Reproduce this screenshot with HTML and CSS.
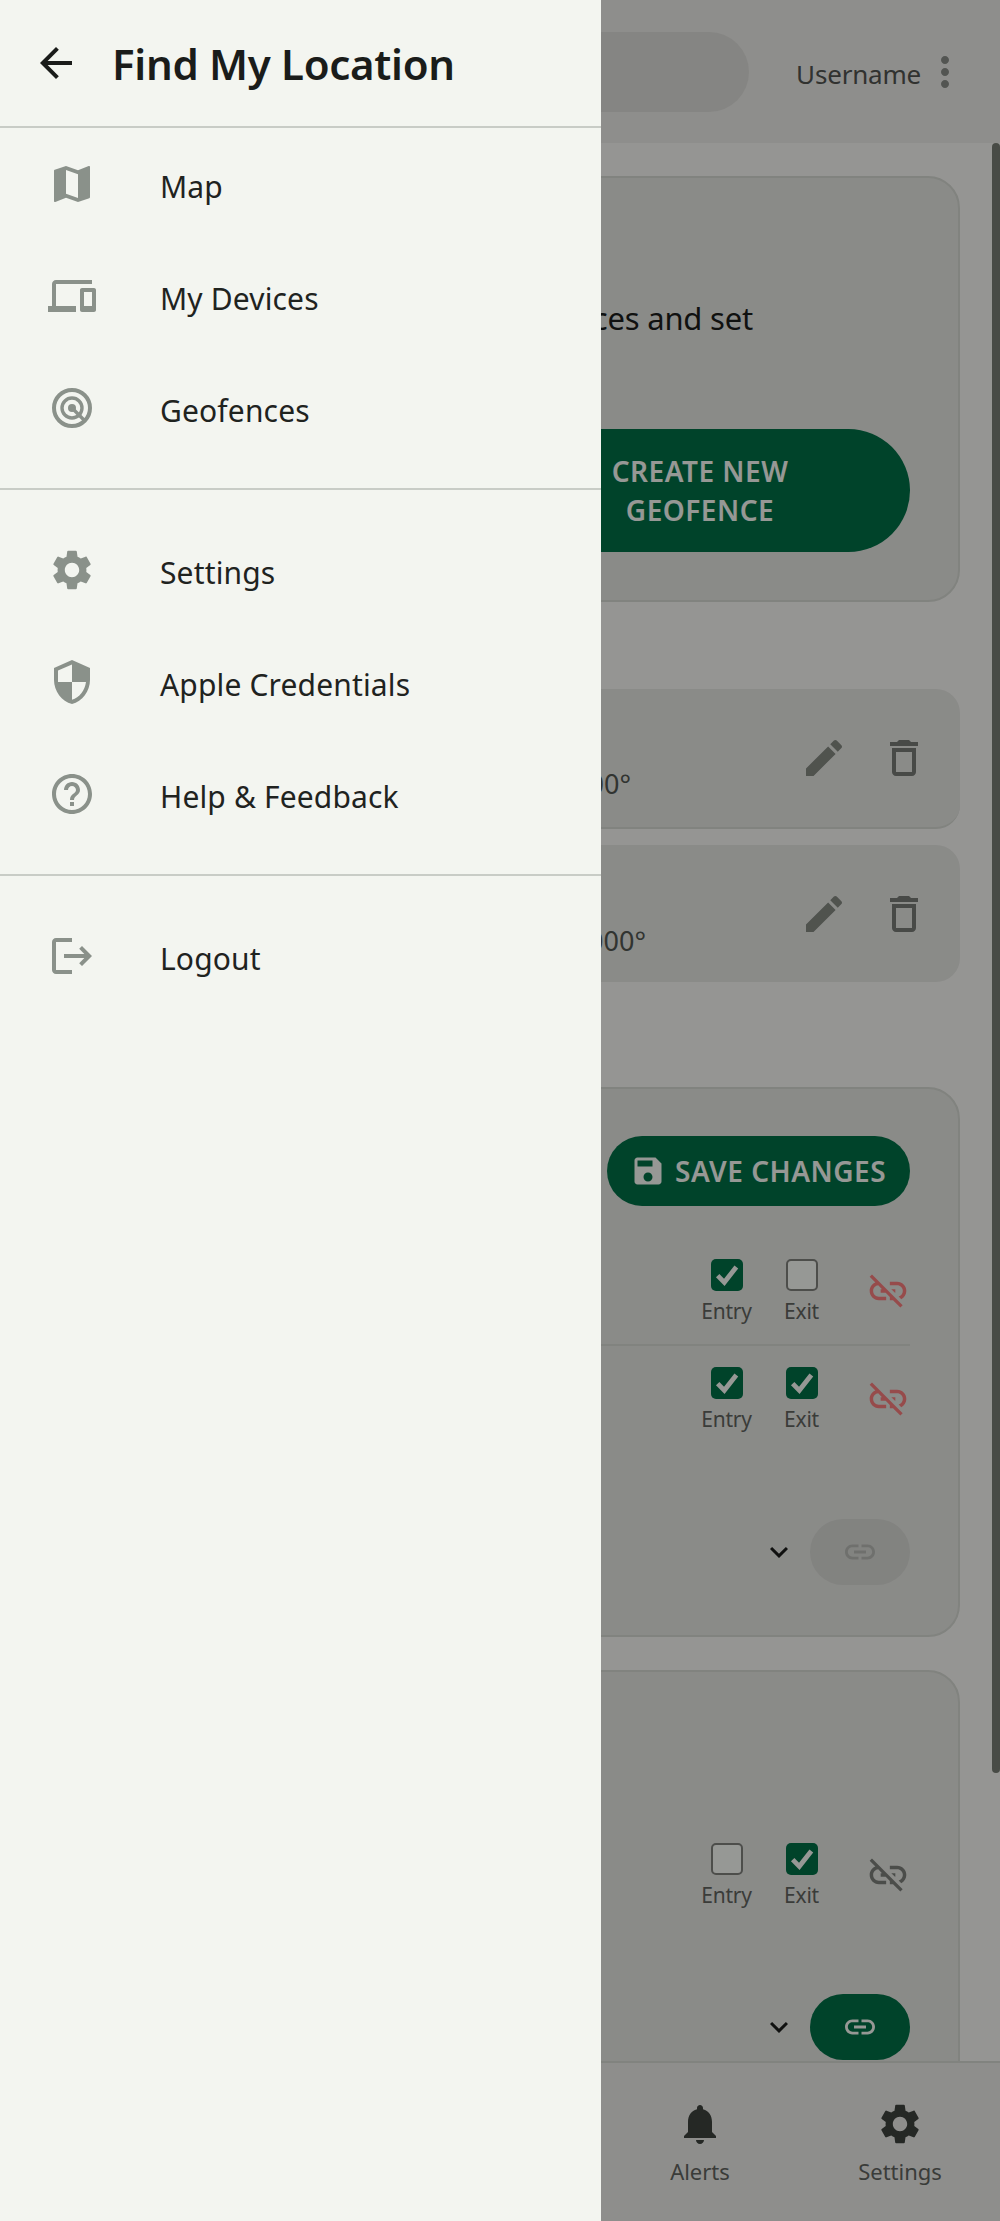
FILE: index.html
```html
<!DOCTYPE html>
<html>
<head>
    <title>Find My Location</title>
    <link rel="stylesheet" href="styles.css">
</head>
<body>
    <div class="app">
        <header class="topbar">
            <div class="search"></div>
            <span class="username">Username</span>
            <svg class="icon icon-48 more" viewBox="0 0 24 24"><path d="M12 8c1.1 0 2-.9 2-2s-.9-2-2-2-2 .9-2 2 .9 2 2 2zm0 2c-1.1 0-2 .9-2 2s.9 2 2 2 2-.9 2-2-.9-2-2-2zm0 6c-1.1 0-2 .9-2 2s.9 2 2 2 2-.9 2-2-.9-2-2-2z"/></svg>
        </header>

        <main class="content">
            <section class="card intro">
                <p class="intro-text">devices and set</p>
                <button class="btn btn-create">CREATE NEW<br>GEOFENCE</button>
            </section>

            <section class="fences">
                <div class="fence fence-a">
                    <span class="fence-coords">37.33000°</span>
                    <svg class="icon icon-48 edit" viewBox="0 0 24 24"><path d="M3 17.25V21h3.75L17.81 9.94l-3.75-3.75L3 17.25zM20.71 7.04c.39-.39.39-1.02 0-1.41l-2.34-2.34c-.39-.39-1.02-.39-1.41 0l-1.83 1.83 3.75 3.75 1.83-1.83z"/></svg>
                    <svg class="icon icon-48 trash" viewBox="0 0 24 24"><path d="M6 19c0 1.1.9 2 2 2h8c1.1 0 2-.9 2-2V7H6v12zM8 9h8v10H8V9zm7.5-5l-1-1h-5l-1 1H5v2h14V4h-3.5z"/></svg>
                </div>
                <div class="fence fence-b">
                    <span class="fence-coords">122.12000°</span>
                    <svg class="icon icon-48 edit" viewBox="0 0 24 24"><path d="M3 17.25V21h3.75L17.81 9.94l-3.75-3.75L3 17.25zM20.71 7.04c.39-.39.39-1.02 0-1.41l-2.34-2.34c-.39-.39-1.02-.39-1.41 0l-1.83 1.83 3.75 3.75 1.83-1.83z"/></svg>
                    <svg class="icon icon-48 trash" viewBox="0 0 24 24"><path d="M6 19c0 1.1.9 2 2 2h8c1.1 0 2-.9 2-2V7H6v12zM8 9h8v10H8V9zm7.5-5l-1-1h-5l-1 1H5v2h14V4h-3.5z"/></svg>
                </div>
            </section>

            <section class="card device-card">
                <div class="save-row">
                    <button class="btn btn-save">
                        <svg class="icon icon-36" viewBox="0 0 24 24"><path d="M17 3H5c-1.11 0-2 .9-2 2v14c0 1.1.89 2 2 2h14c1.1 0 2-.9 2-2V7l-4-4zm-5 16c-1.66 0-3-1.34-3-3s1.34-3 3-3 3 1.34 3 3-1.34 3-3 3zm3-10H5V5h10v4z"/></svg>
                        SAVE CHANGES
                    </button>
                </div>
                <div class="link-item with-line">
                    <div class="check-col">
                        <span class="check on"><svg viewBox="0 0 24 24"><path d="M5 12.5l5 5L19 6" /></svg></span>
                        <span class="check-label">Entry</span>
                    </div>
                    <div class="check-col">
                        <span class="check"></span>
                        <span class="check-label">Exit</span>
                    </div>
                    <svg class="icon unlink red" viewBox="0 0 24 24"><path d="M17 7h-4v1.9h4c1.71 0 3.1 1.39 3.1 3.1 0 1.43-.98 2.63-2.31 2.98l1.46 1.46C20.88 15.61 22 13.95 22 12c0-2.76-2.24-5-5-5zm-1 4h-2.19l2 2H16zM2 4.27l3.11 3.11C3.29 8.12 2 9.91 2 12c0 2.76 2.24 5 5 5h4v-1.9H7c-1.71 0-3.1-1.39-3.1-3.1 0-1.59 1.21-2.9 2.76-3.07L8.73 11H8v2h2.73L13 15.27V17h1.73l4.01 4L20 19.74 3.27 3 2 4.27z"/></svg>
                </div>
                <div class="link-item">
                    <div class="check-col">
                        <span class="check on"><svg viewBox="0 0 24 24"><path d="M5 12.5l5 5L19 6" /></svg></span>
                        <span class="check-label">Entry</span>
                    </div>
                    <div class="check-col">
                        <span class="check on"><svg viewBox="0 0 24 24"><path d="M5 12.5l5 5L19 6" /></svg></span>
                        <span class="check-label">Exit</span>
                    </div>
                    <svg class="icon unlink red" viewBox="0 0 24 24"><path d="M17 7h-4v1.9h4c1.71 0 3.1 1.39 3.1 3.1 0 1.43-.98 2.63-2.31 2.98l1.46 1.46C20.88 15.61 22 13.95 22 12c0-2.76-2.24-5-5-5zm-1 4h-2.19l2 2H16zM2 4.27l3.11 3.11C3.29 8.12 2 9.91 2 12c0 2.76 2.24 5 5 5h4v-1.9H7c-1.71 0-3.1-1.39-3.1-3.1 0-1.59 1.21-2.9 2.76-3.07L8.73 11H8v2h2.73L13 15.27V17h1.73l4.01 4L20 19.74 3.27 3 2 4.27z"/></svg>
                </div>
                <div class="add-row">
                    <svg class="icon icon-36 chevron" viewBox="0 0 24 24"><path d="M16.59 8.59L12 13.17 7.41 8.59 6 10l6 6 6-6z"/></svg>
                    <div class="pill pill-off">
                        <svg class="icon icon-36" viewBox="0 0 24 24"><path d="M3.9 12c0-1.71 1.39-3.1 3.1-3.1h4V7H7c-2.76 0-5 2.24-5 5s2.24 5 5 5h4v-1.9H7c-1.71 0-3.1-1.39-3.1-3.1zM8 13h8v-2H8v2zm9-6h-4v1.9h4c1.71 0 3.1 1.39 3.1 3.1s-1.39 3.1-3.1 3.1h-4V17h4c2.76 0 5-2.24 5-5s-2.24-5-5-5z"/></svg>
                    </div>
                </div>
            </section>

            <section class="card device-card device-card-last">
                <div class="link-item">
                    <div class="check-col">
                        <span class="check"></span>
                        <span class="check-label">Entry</span>
                    </div>
                    <div class="check-col">
                        <span class="check on"><svg viewBox="0 0 24 24"><path d="M5 12.5l5 5L19 6" /></svg></span>
                        <span class="check-label">Exit</span>
                    </div>
                    <svg class="icon unlink grey" viewBox="0 0 24 24"><path d="M17 7h-4v1.9h4c1.71 0 3.1 1.39 3.1 3.1 0 1.43-.98 2.63-2.31 2.98l1.46 1.46C20.88 15.61 22 13.95 22 12c0-2.76-2.24-5-5-5zm-1 4h-2.19l2 2H16zM2 4.27l3.11 3.11C3.29 8.12 2 9.91 2 12c0 2.76 2.24 5 5 5h4v-1.9H7c-1.71 0-3.1-1.39-3.1-3.1 0-1.59 1.21-2.9 2.76-3.07L8.73 11H8v2h2.73L13 15.27V17h1.73l4.01 4L20 19.74 3.27 3 2 4.27z"/></svg>
                </div>
                <div class="add-row">
                    <svg class="icon icon-36 chevron" viewBox="0 0 24 24"><path d="M16.59 8.59L12 13.17 7.41 8.59 6 10l6 6 6-6z"/></svg>
                    <div class="pill pill-on">
                        <svg class="icon icon-36" viewBox="0 0 24 24"><path d="M3.9 12c0-1.71 1.39-3.1 3.1-3.1h4V7H7c-2.76 0-5 2.24-5 5s2.24 5 5 5h4v-1.9H7c-1.71 0-3.1-1.39-3.1-3.1zM8 13h8v-2H8v2zm9-6h-4v1.9h4c1.71 0 3.1 1.39 3.1 3.1s-1.39 3.1-3.1 3.1h-4V17h4c2.76 0 5-2.24 5-5s-2.24-5-5-5z"/></svg>
                    </div>
                </div>
            </section>
            <div class="scrollbar"></div>
        </main>

        <nav class="bottom-nav">
            <div class="nav-item"></div>
            <div class="nav-item"></div>
            <div class="nav-item"></div>
            <div class="nav-item">
                <svg class="icon icon-48" viewBox="0 0 24 24"><path d="M12 22c1.1 0 2-.9 2-2h-4c0 1.1.89 2 2 2zm6-6v-5c0-3.07-1.64-5.64-4.5-6.32V4c0-.83-.67-1.5-1.5-1.5s-1.5.67-1.5 1.5v.68C7.63 5.36 6 7.92 6 11v5l-2 2v1h16v-1l-2-2z"/></svg>
                <span>Alerts</span>
            </div>
            <div class="nav-item">
                <svg class="icon icon-48" viewBox="0 0 24 24"><path d="M19.14 12.94c.04-.3.06-.61.06-.94 0-.32-.02-.64-.07-.94l2.03-1.58c.18-.14.23-.41.12-.61l-1.92-3.32c-.12-.22-.37-.29-.59-.22l-2.39.96c-.5-.38-1.03-.7-1.62-.94l-.36-2.54c-.04-.24-.24-.41-.48-.41h-3.84c-.24 0-.43.17-.47.41l-.36 2.54c-.59.24-1.13.57-1.62.94l-2.39-.96c-.22-.08-.47 0-.59.22L2.74 8.87c-.12.21-.08.47.12.61l2.03 1.58c-.05.3-.09.63-.09.94s.02.64.07.94l-2.03 1.58c-.18.14-.23.41-.12.61l1.92 3.32c.12.22.37.29.59.22l2.39-.96c.5.38 1.03.7 1.62.94l.36 2.54c.05.24.24.41.48.41h3.84c.24 0 .44-.17.47-.41l.36-2.54c.59-.24 1.13-.56 1.62-.94l2.39.96c.22.08.47 0 .59-.22l1.92-3.32c.12-.22.07-.47-.12-.61l-2.01-1.58zM12 15.6c-1.98 0-3.6-1.62-3.6-3.6s1.62-3.6 3.6-3.6 3.6 1.62 3.6 3.6-1.62 3.6-3.6 3.6z"/></svg>
                <span>Settings</span>
            </div>
        </nav>

        <div class="scrim"></div>

        <aside class="drawer">
            <div class="drawer-head">
                <svg class="icon icon-48" viewBox="0 0 24 24"><path d="M20 11H7.83l5.59-5.59L12 4l-8 8 8 8 1.41-1.41L7.83 13H20v-2z"/></svg>
                <h1>Find My Location</h1>
            </div>
            <ul class="menu">
                <li>
                    <svg class="icon icon-48" viewBox="0 0 24 24"><path d="M20.5 3l-.16.03L15 5.1 9 3 3.36 4.9c-.21.07-.36.25-.36.48V20.5c0 .28.22.5.5.5l.16-.03L9 18.9l6 2.1 5.64-1.9c.21-.07.36-.25.36-.48V3.5c0-.28-.22-.5-.5-.5zM15 19l-6-2.11V5l6 2.11V19z"/></svg>
                    <span>Map</span>
                </li>
                <li>
                    <svg class="icon icon-48" viewBox="0 0 24 24"><path d="M4 6h18V4H4c-1.1 0-2 .9-2 2v11H0v3h14v-3H4V6zm19 2h-6c-.55 0-1 .45-1 1v10c0 .55.45 1 1 1h6c.55 0 1-.45 1-1V9c0-.55-.45-1-1-1zm-1 9h-4v-7h4v7z"/></svg>
                    <span>My Devices</span>
                </li>
                <li>
                    <svg class="icon icon-48 target" viewBox="0 0 24 24">
                        <circle cx="12" cy="12" r="9"/>
                        <circle cx="12" cy="12" r="5"/>
                        <circle class="target-dot" cx="12" cy="12" r="2"/>
                        <path d="M12 12l6 6"/>
                    </svg>
                    <span>Geofences</span>
                </li>
            </ul>
            <hr class="drawer-line">
            <ul class="menu">
                <li>
                    <svg class="icon icon-48" viewBox="0 0 24 24"><path d="M19.14 12.94c.04-.3.06-.61.06-.94 0-.32-.02-.64-.07-.94l2.03-1.58c.18-.14.23-.41.12-.61l-1.92-3.32c-.12-.22-.37-.29-.59-.22l-2.39.96c-.5-.38-1.03-.7-1.62-.94l-.36-2.54c-.04-.24-.24-.41-.48-.41h-3.84c-.24 0-.43.17-.47.41l-.36 2.54c-.59.24-1.13.57-1.62.94l-2.39-.96c-.22-.08-.47 0-.59.22L2.74 8.87c-.12.21-.08.47.12.61l2.03 1.58c-.05.3-.09.63-.09.94s.02.64.07.94l-2.03 1.58c-.18.14-.23.41-.12.61l1.92 3.32c.12.22.37.29.59.22l2.39-.96c.5.38 1.03.7 1.62.94l.36 2.54c.05.24.24.41.48.41h3.84c.24 0 .44-.17.47-.41l.36-2.54c.59-.24 1.13-.56 1.62-.94l2.39.96c.22.08.47 0 .59-.22l1.92-3.32c.12-.22.07-.47-.12-.61l-2.01-1.58zM12 15.6c-1.98 0-3.6-1.62-3.6-3.6s1.62-3.6 3.6-3.6 3.6 1.62 3.6 3.6-1.62 3.6-3.6 3.6z"/></svg>
                    <span>Settings</span>
                </li>
                <li>
                    <svg class="icon icon-48" viewBox="0 0 24 24"><path d="M12 1L3 5v6c0 5.55 3.84 10.74 9 12 5.16-1.26 9-6.45 9-12V5l-9-4zm0 10.99h7c-.53 4.12-3.28 7.79-7 8.94V12H5V6.3l7-3.11v8.8z"/></svg>
                    <span>Apple Credentials</span>
                </li>
                <li>
                    <svg class="icon icon-48" viewBox="0 0 24 24"><path d="M11 18h2v-2h-2v2zm1-16C6.48 2 2 6.48 2 12s4.48 10 10 10 10-4.48 10-10S17.52 2 12 2zm0 18c-4.41 0-8-3.59-8-8s3.59-8 8-8 8 3.59 8 8-3.59 8-8 8zm0-14c-2.21 0-4 1.79-4 4h2c0-1.1.9-2 2-2s2 .9 2 2c0 2-3 1.75-3 5h2c0-2.25 3-2.5 3-5 0-2.21-1.79-4-4-4z"/></svg>
                    <span>Help &amp; Feedback</span>
                </li>
            </ul>
            <hr class="drawer-line">
            <ul class="menu">
                <li>
                    <svg class="icon icon-48" viewBox="0 0 24 24"><path d="M17 7l-1.41 1.41L18.17 11H8v2h10.17l-2.58 2.58L17 17l5-5zM4 5h8V3H4c-1.1 0-2 .9-2 2v14c0 1.1.9 2 2 2h8v-2H4V5z"/></svg>
                    <span>Logout</span>
                </li>
            </ul>
        </aside>
    </div>
</body>
</html>
```

FILE: styles.css
```css
* {
    box-sizing: border-box;
}
body {
    margin: 0;
    font-family: "Noto Sans", "Open Sans", sans-serif;
    color: #1a1c1a;
    background-color: #f3f5f0;
}
.app {
    position: relative;
    width: 1000px;
    height: 2221px;
    overflow: hidden;
    display: flex;
    flex-direction: column;
}
.icon {
    display: block;
    flex: none;
    fill: currentColor;
}
.icon-48 {
    width: 48px;
    height: 48px;
}
.icon-36 {
    width: 36px;
    height: 36px;
}

/* top bar */
.topbar {
    height: 143px;
    flex: none;
    display: flex;
    align-items: center;
    padding: 0 31px 0 40px;
    background-color: #e5e5e2;
}
.search {
    flex: 1;
    height: 80px;
    border-radius: 40px;
    background-color: #d7d7d3;
}
.username {
    margin-left: 47px;
    font-size: 26px;
    letter-spacing: -0.2px;
    color: #4f524e;
    padding-top: 4px;
}
.more {
    color: #868a85;
}

/* main column */
.content {
    position: relative;
    flex: 1;
    overflow: hidden;
    padding: 33px 40px 0;
    background-color: #f1f1ee;
}
.scrollbar {
    position: absolute;
    top: 0;
    right: 0;
    width: 8px;
    height: 1630px;
    border-radius: 4px;
    background-color: #747a71;
}
.card {
    border: 2px solid #d0d3cd;
    border-radius: 32px;
    background-color: #dfe0dc;
}
.intro {
    height: 426px;
    padding: 0 48px;
    display: flex;
    flex-direction: column;
    align-items: flex-end;
}
.intro-text {
    margin: 115px 157px 0 0;
    font-size: 31px;
    line-height: 50px;
    white-space: nowrap;
    letter-spacing: -0.2px;
    color: #1a1c1a;
}
.btn {
    border: none;
    font-family: inherit;
    font-weight: 600;
    font-size: 28px;
    letter-spacing: 0.5px;
    color: #f3f5f0;
    background-color: #006c44;
}
.btn-create {
    width: 420px;
    height: 123px;
    margin-top: 86px;
    border-radius: 62px;
    line-height: 38.5px;
}

/* saved geofences */
.fences {
    margin-top: 87px;
    display: flex;
    flex-direction: column;
    gap: 16px;
}
.fence {
    display: flex;
    align-items: center;
    gap: 32px;
    padding-right: 32px;
    border-radius: 24px;
    border-bottom: 2px solid #d0d3cd;
    background-color: #dfe0dc;
}
.fence-a {
    height: 140px;
}
.fence-b {
    height: 137px;
    border-bottom: none;
}
.fence-coords {
    flex: 1;
    text-align: right;
    white-space: nowrap;
    font-size: 27px;
    color: #50544f;
    transform: translateY(25px);
}
.fence-a .fence-coords {
    padding-right: 137px;
}
.fence-b .fence-coords {
    padding-right: 122px;
    transform: translateY(27px);
}
.edit {
    color: #81867f;
}
.trash {
    color: #747873;
}

/* device cards */
.device-card {
    margin-top: 105px;
    height: 550px;
    padding: 47px 48px 0 0;
}
.device-card-last {
    margin-top: 33px;
    height: 500px;
    padding-top: 150px;
}
.save-row {
    display: flex;
    justify-content: flex-end;
    margin-bottom: 32px;
}
.btn-save {
    width: 303px;
    height: 70px;
    border-radius: 35px;
    display: flex;
    align-items: center;
    gap: 9px;
    padding: 0 0 0 23px;
}
.link-item {
    height: 108px;
    padding-top: 21px;
    display: flex;
    justify-content: flex-end;
    align-items: flex-start;
}
.with-line {
    border-bottom: 2px solid #d0d3cd;
}
.check-col {
    width: 75px;
    display: flex;
    flex-direction: column;
    align-items: center;
}
.check {
    width: 32px;
    height: 32px;
    border: 2px solid #7c7e7a;
    border-radius: 5px;
    background-color: #f3f5f0;
}
.check.on {
    border: none;
    background-color: #006c44;
}
.check svg {
    display: block;
    width: 32px;
    height: 32px;
    fill: none;
    stroke: #f3f5f0;
    stroke-width: 3.6;
}
.check-label {
    margin-top: 5px;
    font-size: 21px;
    line-height: 30px;
    letter-spacing: -0.2px;
    color: #5e615c;
}
.unlink {
    width: 44px;
    height: 44px;
    margin: 10px 0 0 27px;
}
.red {
    color: #f27979;
}
.grey {
    color: #7a7d78;
}
.add-row {
    margin-top: 65px;
    display: flex;
    justify-content: flex-end;
    align-items: center;
    gap: 13px;
}
.device-card-last .add-row {
    margin-top: 64px;
}
.chevron {
    color: #1a1c1a;
}
.pill {
    width: 100px;
    height: 66px;
    border-radius: 33px;
    display: flex;
    align-items: center;
    justify-content: center;
}
.pill-off {
    background-color: #d2d3cf;
    color: #b3b5b1;
}
.pill-on {
    background-color: #006c44;
    color: #f3f5f0;
}

/* bottom navigation */
.bottom-nav {
    position: relative;
    height: 160px;
    flex: none;
    display: grid;
    grid-template-columns: repeat(5, 1fr);
    border-top: 2px solid #d0d3cd;
    background-color: #e5e5e2;
}
.nav-item {
    display: flex;
    flex-direction: column;
    align-items: center;
    padding-top: 37px;
    color: #3c413c;
}
.nav-item span {
    margin-top: 5px;
    font-size: 22px;
    line-height: 36px;
    color: #5e615c;
}

/* drawer on top of the dimmed page */
.scrim {
    position: absolute;
    top: 0;
    right: 0;
    bottom: 0;
    left: 0;
    background-color: rgba(0, 0, 0, 0.38);
}
.drawer {
    position: absolute;
    top: 0;
    left: 0;
    bottom: 0;
    width: 601px;
    background-color: #f3f5f0;
}
.drawer-head {
    height: 128px;
    display: flex;
    align-items: center;
    gap: 32px;
    padding-left: 32px;
    border-bottom: 2px solid #c8ccc6;
}
.drawer-head h1 {
    margin: 0;
    font-size: 42px;
    font-weight: 600;
    letter-spacing: -0.3px;
    color: #1a1c1a;
}
.menu {
    list-style: none;
    margin: 0;
    padding: 0;
}
.menu li {
    height: 112px;
    display: flex;
    align-items: center;
    gap: 64px;
    padding-left: 48px;
    font-size: 30px;
    letter-spacing: 0.15px;
    color: #1f231f;
}
.menu li span {
    padding-top: 4px;
}
.menu .icon {
    color: #8a918a;
}
.target {
    fill: none !important;
    stroke: currentColor;
    stroke-width: 2;
}
.target circle:nth-child(2),
.target path {
    stroke-width: 1.7;
}
.target .target-dot {
    fill: currentColor;
    stroke: none;
}
.drawer-line {
    height: 2px;
    margin: 24px 0;
    border: none;
    background-color: #c8ccc6;
}
```
